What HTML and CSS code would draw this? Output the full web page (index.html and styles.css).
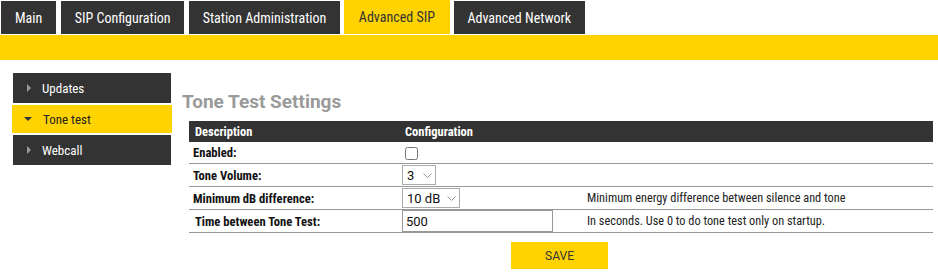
FILE: index.html
```html
<!DOCTYPE html>
<html lang="en">
<head>
    <meta charset="UTF-8">
    <title>Advanced SIP</title>
    <link rel="stylesheet" href="styles.css">
</head>
<body>
    <div class="tabs">
        <a class="tab">Main</a>
        <a class="tab">SIP Configuration</a>
        <a class="tab">Station Administration</a>
        <a class="tab active">Advanced SIP</a>
        <a class="tab">Advanced Network</a>
    </div>
    <div class="subbar"></div>

    <div class="page">
        <div class="sidebar">
            <a class="side-item"><span class="arrow"></span>Updates</a>
            <a class="side-item active"><span class="arrow"></span>Tone test</a>
            <a class="side-item"><span class="arrow"></span>Webcall</a>
        </div>

        <div class="content">
            <h2>Tone Test Settings</h2>
            <table class="settings">
                <tr>
                    <th class="col-desc">Description</th>
                    <th class="col-conf">Configuration</th>
                    <th></th>
                </tr>
                <tr>
                    <td class="label">Enabled:</td>
                    <td><input type="checkbox" class="check"></td>
                    <td></td>
                </tr>
                <tr>
                    <td class="label">Tone Volume:</td>
                    <td><select class="sel sel-small"><option>3</option></select></td>
                    <td></td>
                </tr>
                <tr>
                    <td class="label">Minimum dB difference:</td>
                    <td><select class="sel sel-db"><option>10 dB</option></select></td>
                    <td class="help">Minimum energy difference between silence and tone</td>
                </tr>
                <tr>
                    <td class="label indent">Time between Tone Test:</td>
                    <td><input type="text" class="txt" value="500"></td>
                    <td class="help">In seconds. Use 0 to do tone test only on startup.</td>
                </tr>
            </table>
            <div class="actions">
                <button class="save">SAVE</button>
            </div>
        </div>
    </div>
</body>
</html>
```

FILE: styles.css
```css
body {
    margin: 0;
    font-family: 'Roboto Condensed', 'Roboto', 'Liberation Sans', sans-serif;
    font-stretch: condensed;
    color: #222;
    background: #fff;
}
.tabs {
    display: flex;
    align-items: flex-end;
    height: 34px;
    padding-left: 1px;
}
.tab {
    display: flex;
    align-items: center;
    height: 33px;
    padding: 0 13.5px;
    margin-right: 5px;
    background-color: #333;
    color: #fff;
    font-size: 14px;
}
.tab:first-child {
    padding: 0 14px;
}
.tab.active {
    height: 34px;
    margin-left: -1px;
    margin-right: 4px;
    padding: 0 15px;
    background-color: #ffd300;
    color: #333;
}
.subbar {
    margin-top: 1px;
    height: 25px;
    background-color: #ffd300;
}
.page {
    display: flex;
    padding: 13px 5px 0 12px;
}
.sidebar {
    width: 160px;
    display: flex;
    flex-direction: column;
    gap: 2px;
}
.side-item {
    display: flex;
    align-items: center;
    height: 30px;
    margin: 0 1px;
    background-color: #333;
    color: #fff;
    font-size: 13px;
}
.side-item.active {
    height: 28px;
    margin: 0;
    background-color: #ffd300;
    color: #222;
}
.arrow {
    width: 0;
    height: 0;
    margin: 0 11px 0 14px;
    border-top: 4px solid transparent;
    border-bottom: 4px solid transparent;
    border-left: 4px solid #999;
}
.side-item.active .arrow {
    margin: 0 11px 0 12px;
    border-left: 4px solid transparent;
    border-right: 4px solid transparent;
    border-top: 4px solid #333;
    border-bottom: 0;
}
.content {
    flex: 1;
    padding-left: 10px;
}
h2 {
    margin: 17px 0 8px 0;
    font-family: 'Roboto', 'Liberation Sans', sans-serif;
    font-stretch: normal;
    font-size: 19px;
    color: #9a9a9a;
}
.settings {
    width: 744px;
    margin-left: 7px;
    border-collapse: collapse;
    font-size: 12.3px;
}
.settings th {
    height: 21px;
    padding: 0;
    background-color: #333;
    color: #fff;
    text-align: left;
    font-weight: 700;
    font-size: 12.5px;
}
.col-desc {
    width: 207px;
    padding-left: 6px !important;
}
.col-conf {
    width: 182px;
    padding-left: 3px !important;
}
.settings td {
    height: 21px;
    padding: 0;
    border-bottom: 1px solid #999;
}
.settings td.label {
    padding-left: 4px;
    font-weight: 700;
    font-size: 12.6px;
    color: #111;
}
.settings td.indent {
    padding-left: 6px;
}
.help {
    color: #222;
}
.check {
    margin: 3px 0 2px 3px;
    width: 13px;
    height: 13px;
    vertical-align: middle;
}
.sel {
    appearance: none;
    height: 20px;
    margin: 1px 0;
    padding: 0 0 0 4px;
    font-family: 'Roboto', 'Liberation Sans', sans-serif;
    font-size: 13px;
    border: 1px solid #aaa;
    border-radius: 0;
    background: #fff url("data:image/svg+xml,%3Csvg xmlns='http://www.w3.org/2000/svg' width='9' height='5' viewBox='0 0 9 5'%3E%3Cpath d='M0.5 0.5L4.5 4.5L8.5 0.5' fill='none' stroke='%23999' stroke-width='1'/%3E%3C/svg%3E") no-repeat right 3px center;
    color: #111;
}
.sel-small {
    width: 34px;
}
.sel-db {
    width: 58px;
}
.txt {
    display: block;
    width: 151px;
    height: 22px;
    margin: 0;
    box-sizing: border-box;
    padding: 0 3px;
    border: 1px solid #999;
    border-radius: 0;
    font-family: 'Roboto', 'Liberation Sans', sans-serif;
    font-size: 13px;
    color: #111;
}
.actions {
    display: flex;
    justify-content: center;
    margin-top: 9px;
    padding-left: 4px;
}
.save {
    width: 97px;
    height: 27px;
    border: none;
    background-color: #ffd300;
    color: #333;
    font-family: 'Roboto', 'Liberation Sans', sans-serif;
    font-size: 12px;
}
```
